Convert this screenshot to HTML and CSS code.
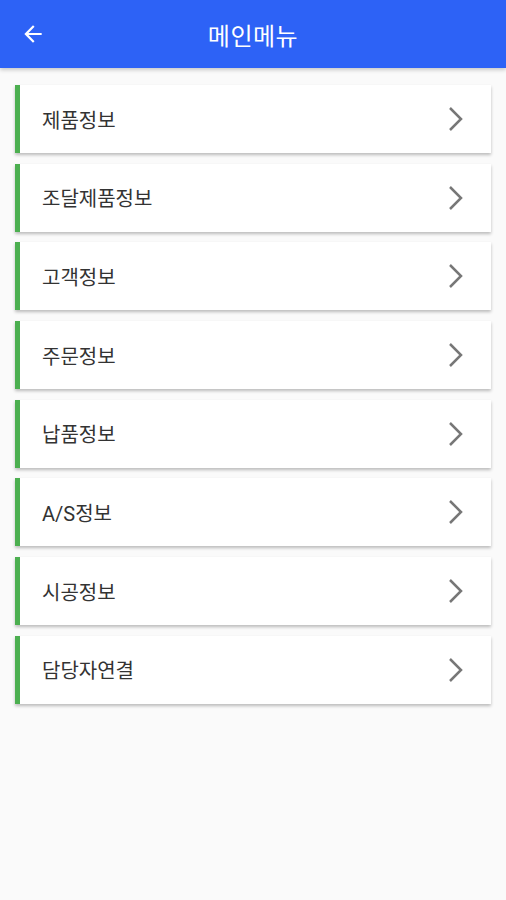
FILE: index.html
```html
<!DOCTYPE html>
<html>
<head>
  <title>메인메뉴</title>
  <link rel="stylesheet" href="styles.css">
</head>
<body>

<header class="appbar">
  <a href="#" class="back">
    <svg width="26" height="26" viewBox="0 0 24 24"><path d="M20 11H7.83l5.59-5.59L12 4l-8 8 8 8 1.41-1.41L7.83 13H20v-2z" fill="#fff"/></svg>
  </a>
  <div class="title">메인메뉴</div>
</header>

<div class="menu">
  <a href="#" class="menu-item"><span>제품정보</span><svg class="chev" viewBox="0 0 16 26"><polyline points="2,2 13,13 2,24"/></svg></a>
  <a href="#" class="menu-item"><span>조달제품정보</span><svg class="chev" viewBox="0 0 16 26"><polyline points="2,2 13,13 2,24"/></svg></a>
  <a href="#" class="menu-item"><span>고객정보</span><svg class="chev" viewBox="0 0 16 26"><polyline points="2,2 13,13 2,24"/></svg></a>
  <a href="#" class="menu-item"><span>주문정보</span><svg class="chev" viewBox="0 0 16 26"><polyline points="2,2 13,13 2,24"/></svg></a>
  <a href="#" class="menu-item"><span>납품정보</span><svg class="chev" viewBox="0 0 16 26"><polyline points="2,2 13,13 2,24"/></svg></a>
  <a href="#" class="menu-item"><span>A/S정보</span><svg class="chev" viewBox="0 0 16 26"><polyline points="2,2 13,13 2,24"/></svg></a>
  <a href="#" class="menu-item"><span>시공정보</span><svg class="chev" viewBox="0 0 16 26"><polyline points="2,2 13,13 2,24"/></svg></a>
  <a href="#" class="menu-item"><span>담당자연결</span><svg class="chev" viewBox="0 0 16 26"><polyline points="2,2 13,13 2,24"/></svg></a>
</div>

</body>
</html>
```

FILE: styles.css
```css
body {
  font-family: Roboto, "Noto Sans CJK KR", sans-serif;
  background-color: #fafafa;
  margin: 0;
  padding: 0;
}
.appbar {
  height: 68px;
  background-color: #2d62f6;
  color: white;
  display: flex;
  align-items: center;
  justify-content: center;
  position: relative;
  box-shadow: 0 2px 4px rgba(0,0,0,0.2);
}
.appbar .back {
  position: absolute;
  left: 20px;
  top: 21px;
  display: flex;
}
.appbar .title {
  font-size: 24px;
  font-weight: 400;
  letter-spacing: 0.5px;
}
.menu {
  padding: 17px 15px 20px 15px;
  display: flex;
  flex-direction: column;
  gap: 10.7px;
}
.menu-item {
  height: 68px;
  background: white;
  border-left: 5px solid #4caf50;
  box-shadow: 0 2px 3px rgba(0,0,0,0.25);
  display: flex;
  align-items: center;
  justify-content: space-between;
  padding: 0 27px 0 22px;
  text-decoration: none;
  color: #333;
  font-size: 20px;
}
.chev {
  width: 16px;
  height: 26px;
  fill: none;
  stroke: #777;
  stroke-width: 2.5;
}
```
